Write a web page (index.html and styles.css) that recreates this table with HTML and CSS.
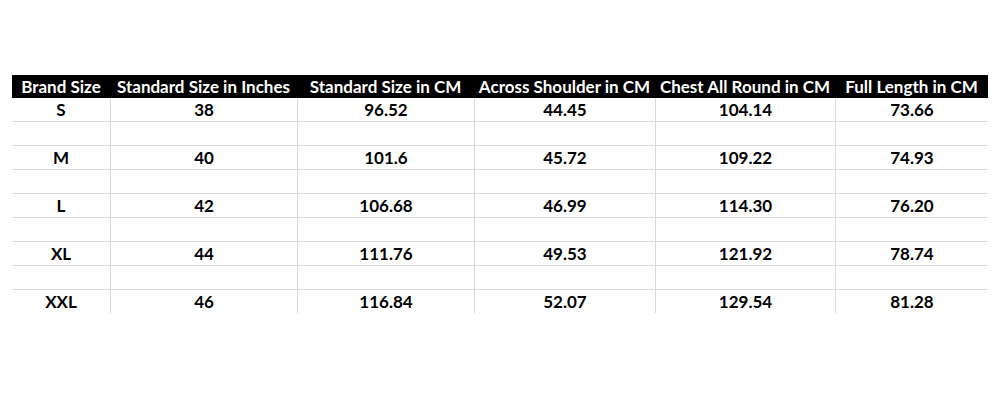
FILE: index.html
```html
<!DOCTYPE html>
<html>
<head>
<meta charset="utf-8">
<link rel="stylesheet" href="styles.css">
</head>
<body>
<table class="size-chart">
  <colgroup>
    <col class="c1"><col class="c2"><col class="c3"><col class="c4"><col class="c5"><col class="c6">
  </colgroup>
  <thead>
    <tr>
      <th>Brand Size</th>
      <th>Standard Size in Inches</th>
      <th>Standard Size in CM</th>
      <th>Across Shoulder in CM</th>
      <th>Chest All Round in CM</th>
      <th>Full Length in CM</th>
    </tr>
  </thead>
  <tbody>
    <tr><td>S</td><td>38</td><td>96.52</td><td>44.45</td><td>104.14</td><td>73.66</td></tr>
    <tr class="gap"><td></td><td></td><td></td><td></td><td></td><td></td></tr>
    <tr><td>M</td><td>40</td><td>101.6</td><td>45.72</td><td>109.22</td><td>74.93</td></tr>
    <tr class="gap"><td></td><td></td><td></td><td></td><td></td><td></td></tr>
    <tr><td>L</td><td>42</td><td>106.68</td><td>46.99</td><td>114.30</td><td>76.20</td></tr>
    <tr class="gap"><td></td><td></td><td></td><td></td><td></td><td></td></tr>
    <tr><td>XL</td><td>44</td><td>111.76</td><td>49.53</td><td>121.92</td><td>78.74</td></tr>
    <tr class="gap"><td></td><td></td><td></td><td></td><td></td><td></td></tr>
    <tr class="last"><td>XXL</td><td>46</td><td>116.84</td><td>52.07</td><td>129.54</td><td>81.28</td></tr>
  </tbody>
</table>
</body>
</html>
```
FILE: styles.css
```css
html, body {
  margin: 0;
  padding: 0;
  background: #ffffff;
}
body {
  padding: 75px 0 0 12px;
  font-family: Lato, "Liberation Sans", sans-serif;
  font-weight: 700;
  font-size: 17px;
  color: #000;
}
.size-chart {
  border-collapse: separate;
  border-spacing: 0;
  table-layout: fixed;
  width: 976px;
}
.c1 { width: 98px; }
.c2 { width: 187px; }
.c3 { width: 177px; }
.c4 { width: 181px; }
.c5 { width: 180px; }
.c6 { width: 153px; }
.size-chart th {
  background: #000;
  color: #fff;
  height: 23px;
  padding: 0;
  font-weight: 700;
  text-align: center;
  white-space: nowrap;
  line-height: 23px;
}
.size-chart td {
  height: 23px;
  padding: 0;
  text-align: center;
  line-height: 23px;
  border-bottom: 1px solid #d9d9d9;
}
.size-chart td + td {
  border-left: 1px solid #d9d9d9;
}
.size-chart tr.last td {
  border-bottom: none;
  height: 22px;
}
```
